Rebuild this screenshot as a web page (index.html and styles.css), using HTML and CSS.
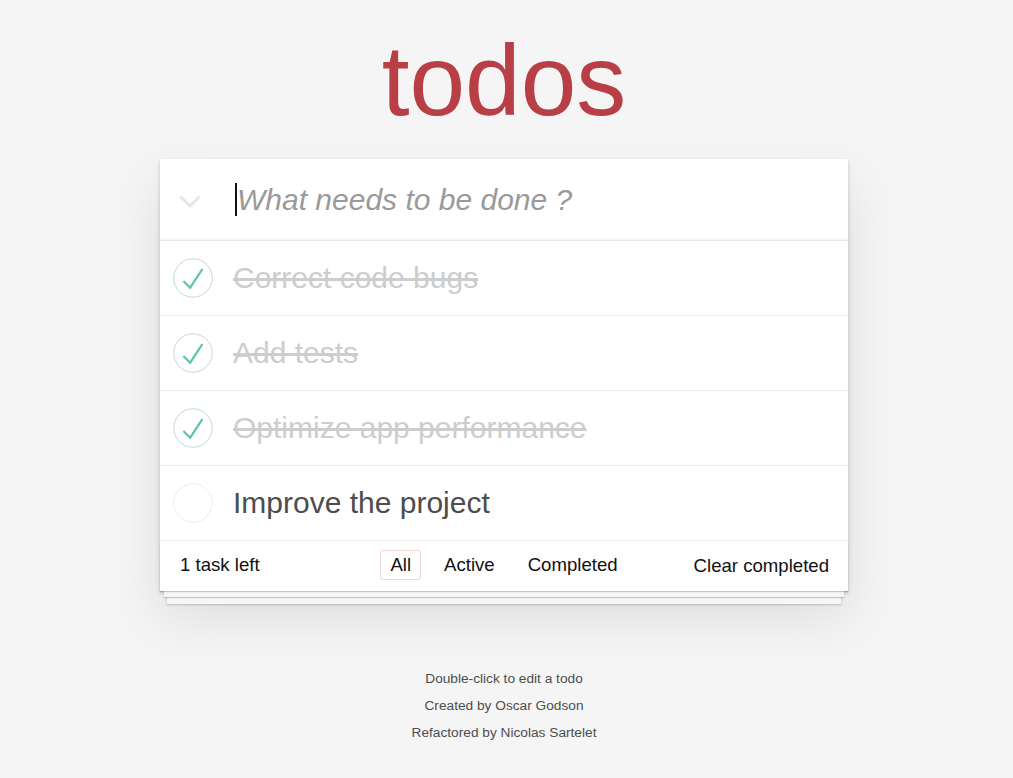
FILE: index.html
```html
<!DOCTYPE html>
<html lang="en">
<head>
<meta charset="utf-8">
<title>todos</title>
<link rel="stylesheet" href="styles.css">
</head>
<body>
<div class="page">
  <h1 class="title">todos</h1>
  <section class="todoapp">
    <header class="new-row">
      <span class="toggle-all">
        <svg width="22" height="14" viewBox="0 0 22 14"><polyline points="1.5,1.5 11,11 20.5,1.5" fill="none" stroke="#e6e6e6" stroke-width="3"/></svg>
      </span>
      <span class="caret"></span>
      <input class="new-todo" type="text" placeholder="What needs to be done ?">
    </header>
    <ul class="todo-list">
      <li class="todo done">
        <svg class="toggle" width="40" height="40" viewBox="-2 -2 104 104"><circle cx="50" cy="50" r="50" fill="none" stroke="#bddad5" stroke-width="2.6"/><path fill="#5dc2af" d="M72 25L42 71 27 56l-4 4 20 20 34-52z"/></svg>
        <span class="label">Correct code bugs</span>
      </li>
      <li class="todo done">
        <svg class="toggle" width="40" height="40" viewBox="-2 -2 104 104"><circle cx="50" cy="50" r="50" fill="none" stroke="#bddad5" stroke-width="2.6"/><path fill="#5dc2af" d="M72 25L42 71 27 56l-4 4 20 20 34-52z"/></svg>
        <span class="label">Add tests</span>
      </li>
      <li class="todo done">
        <svg class="toggle" width="40" height="40" viewBox="-2 -2 104 104"><circle cx="50" cy="50" r="50" fill="none" stroke="#bddad5" stroke-width="2.6"/><path fill="#5dc2af" d="M72 25L42 71 27 56l-4 4 20 20 34-52z"/></svg>
        <span class="label">Optimize app performance</span>
      </li>
      <li class="todo">
        <svg class="toggle" width="40" height="40" viewBox="-2 -2 104 104"><circle cx="50" cy="50" r="50" fill="none" stroke="#ededed" stroke-width="2.6"/></svg>
        <span class="label">Improve the project</span>
      </li>
    </ul>
    <footer class="footer">
      <span class="count">1 task left</span>
      <ul class="filters">
        <li><a class="filter selected">All</a></li>
        <li><a class="filter">Active</a></li>
        <li><a class="filter">Completed</a></li>
      </ul>
      <span class="clear">Clear completed</span>
    </footer>
  </section>
  <footer class="info">
    <p>Double-click to edit a todo</p>
    <p>Created by Oscar Godson</p>
    <p>Refactored by Nicolas Sartelet</p>
  </footer>
</div>
</body>
</html>
```

FILE: styles.css
```css
html, body {
  margin: 0;
  padding: 0;
}
body {
  background: #f5f5f5;
  color: #111111;
  font-family: "Liberation Sans", Arial, Helvetica, sans-serif;
  font-size: 14px;
}
.page {
  width: 688px;
  margin: 0 auto;
  padding: 30px 5px 0 0;
}
.title {
  margin: 0;
  font-size: 100px;
  line-height: 100px;
  font-weight: normal;
  text-align: center;
  color: #b83f45;
}
.todoapp {
  margin-top: 29px;
  background: #fff;
  position: relative;
  box-shadow: 0 2px 4px 0 rgba(0, 0, 0, 0.2), 0 25px 50px 0 rgba(0, 0, 0, 0.1);
}
.new-row {
  display: flex;
  align-items: center;
  height: 81px;
  box-shadow: inset 0 -2px 1px rgba(0, 0, 0, 0.03);
}
.toggle-all {
  display: flex;
  width: 22px;
  margin-left: 19px;
  margin-right: 34px;
  padding-top: 4px;
}
.caret {
  width: 2px;
  height: 33px;
  background: #111;
}
.new-todo {
  flex: 1;
  border: none;
  outline: none;
  background: transparent;
  padding: 0;
  margin: 0;
  font-family: "Liberation Sans", Arial, sans-serif;
  font-size: 30px;
  color: #4d4d4d;
}
.new-todo::placeholder {
  font-style: italic;
  color: #9a9a9a;
}
.todo-list {
  list-style: none;
  margin: 0;
  padding: 0;
  border-top: 1px solid #e6e6e6;
}
.todo {
  display: flex;
  align-items: center;
  height: 74px;
  border-bottom: 1px solid #ededed;
}
.toggle {
  margin-left: 13px;
  margin-right: 20px;
  flex: none;
}
.label {
  font-size: 30px;
  color: #4d4d4d;
}
.todo.done .label {
  color: #cdcdcd;
  text-decoration: line-through;
}
.footer {
  display: grid;
  grid-template-columns: 1fr auto 1fr;
  align-items: center;
  height: 48px;
  padding: 0 19px 2px 20px;
  font-size: 18.6px;
  color: #111;
  position: relative;
}
.footer::before {
  content: "";
  position: absolute;
  left: 0;
  right: 0;
  top: 0;
  bottom: 0;
  box-shadow: 0 1px 1px rgba(0, 0, 0, 0.2),
    0 10px 0 -4px #f6f6f6,
    0 11px 1px -4px rgba(0, 0, 0, 0.2),
    0 20px 0 -7px #f6f6f6,
    0 21px 2px -7px rgba(0, 0, 0, 0.2);
  pointer-events: none;
}
.count {
  justify-self: start;
}
.filters {
  display: flex;
  gap: 13px;
  list-style: none;
  margin: 0;
  padding: 0 1px 0 0;
}
.filter {
  display: block;
  height: 28px;
  line-height: 28px;
  padding: 0 9px;
  border: 1px solid transparent;
  border-radius: 3px;
  color: #111;
}
.filter.selected {
  border-color: rgba(175, 47, 47, 0.2);
}
.clear {
  justify-self: end;
  padding-top: 2px;
}
.info {
  margin-top: 74px;
  text-align: center;
  color: #4d4d4d;
  font-size: 13.7px;
}
.info p {
  margin: 0;
  line-height: 27px;
}
```
